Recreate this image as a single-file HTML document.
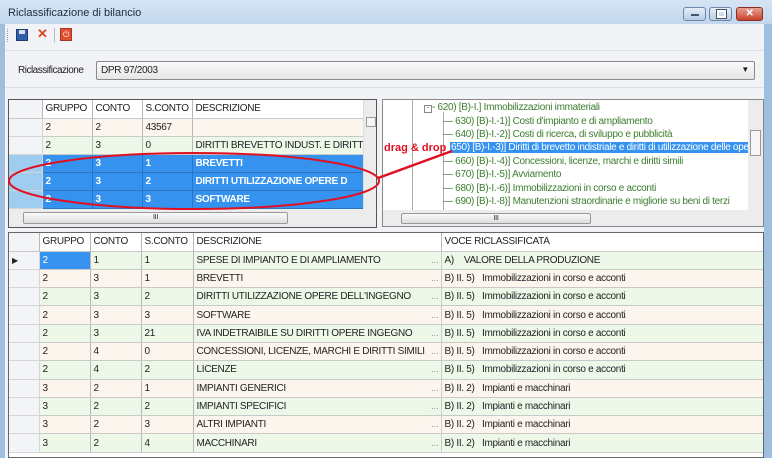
<!DOCTYPE html>
<html><head><meta charset="utf-8"><style>
*{margin:0;padding:0;box-sizing:border-box}
body{width:772px;height:458px;overflow:hidden;background:#9fbfe0;font-family:"Liberation Sans",Arial,sans-serif;font-size:10px;letter-spacing:-0.3px;color:#222;position:relative}
.a{position:absolute}
.title{left:0;top:0;width:772px;height:24px;background:linear-gradient(#d6e5f5,#c2d7ee)}
.client{left:5px;top:24px;width:759px;height:434px;background:#f1f3f6}
.btn{top:7px;height:14px;border:1px solid #6d87a8;border-radius:3px;background:linear-gradient(#e4eef9,#b8cce4)}
table{border-collapse:collapse;table-layout:fixed}
td,th{border-right:1px solid #b8b8b8;border-bottom:1px solid #c9c9c9;padding:0 3px;white-space:nowrap;overflow:hidden;text-align:left;font-weight:normal;height:18px;line-height:17px}
.bt td{height:18.3px}
th{background:#fff}
.g td{background:#edf8e9}.b td{background:#fcf5ee}
.s td{background:#3592ef;color:#fff;font-weight:bold;border-color:#2a75c4}
td.rh{background:#f2f4f7!important;border-color:#d5d5d5}
td.d{color:#999;padding:0;text-align:center;border-right:1px solid #ccc}
td.dd{border-right:none}
.tree div{position:absolute;color:#3b7d2e;font-size:10px;white-space:nowrap}
</style></head><body>
<div class="a title"></div>
<div class="a" style="left:8px;top:7px;font-size:11px;letter-spacing:0;color:#1d2c40">Riclassificazione di bilancio</div>
<div class="a btn" style="left:683px;width:23px"><div class="a" style="left:7px;top:6px;width:8px;height:2px;background:#fff;border:1px solid #456"></div></div>
<div class="a btn" style="left:709px;width:23px"><div class="a" style="left:7px;top:2px;width:9px;height:8px;border:2px solid #fff;outline:1px solid #456"></div></div>
<div class="a btn" style="left:736px;width:27px;background:linear-gradient(#e9a093,#c7432d);border-color:#8a3020;color:#fff;font-weight:bold;font-size:10px;text-align:center;line-height:12px">✕</div>
<div class="a client"></div>
<div class="a" style="left:7px;top:29px;width:1px;height:13px;border-left:1px dotted #999"></div>
<div class="a" style="left:16px;top:29px;width:12px;height:12px;background:#2f5fa8;border:1px solid #1c3d70"><div class="a" style="left:2px;top:0;width:6px;height:4px;background:#dde"></div></div>
<div class="a" style="left:37px;top:26px;color:#d42;font-size:13px;font-weight:bold">✕</div>
<div class="a" style="left:54px;top:28px;width:1px;height:14px;background:#bbb"></div>
<div class="a" style="left:60px;top:28px;width:12px;height:13px;background:#e0502a;border:1px solid #a33;color:#fff;font-size:8px;text-align:center;line-height:11px">⏻</div>
<div class="a" style="left:5px;top:50px;width:759px;height:1px;background:#dde"></div>
<div class="a" style="left:18px;top:65px;font-size:10px;letter-spacing:-0.5px">Riclassificazione</div>
<div class="a" style="left:96px;top:61px;width:659px;height:19px;border:1px solid #8a8a8a;border-radius:2px;background:linear-gradient(#fafafa,#e6e6e6);padding:3px 0 0 4px">DPR 97/2003<span class="a" style="right:5px;top:3px;font-size:8px">▼</span></div>
<div class="a" style="left:5px;top:87px;width:759px;height:1px;background:#dde"></div>

<div class="a" style="left:8px;top:99px;width:369px;height:129px;border:1px solid #555;background:#fff;overflow:hidden">
<table style="width:354px">
<colgroup><col style="width:33px"><col style="width:50px"><col style="width:50px"><col style="width:50px"><col style="width:171px"></colgroup>
<tr><th style="background:#f2f4f7"></th><th>GRUPPO</th><th>CONTO</th><th>S.CONTO</th><th>DESCRIZIONE</th></tr>
<tr class="b"><td class="rh"></td><td>2</td><td>2</td><td>43567</td><td></td></tr>
<tr class="g"><td class="rh"></td><td>2</td><td>3</td><td>0</td><td>DIRITTI BREVETTO INDUST. E DIRITTI</td></tr>
<tr class="s"><td class="rh" style="background:#9fcdf0!important"></td><td>2</td><td>3</td><td>1</td><td>BREVETTI</td></tr>
<tr class="s"><td class="rh" style="background:#9fcdf0!important"></td><td>2</td><td>3</td><td>2</td><td>DIRITTI UTILIZZAZIONE OPERE D</td></tr>
<tr class="s"><td class="rh" style="background:#9fcdf0!important"></td><td>2</td><td>3</td><td>3</td><td>SOFTWARE</td></tr>
</table>
<div class="a" style="left:354px;top:0;width:14px;height:109px;background:#ececec;border-left:1px solid #ddd"><div class="a" style="left:2px;top:17px;width:10px;height:10px;border:1px solid #999;background:#f6f6f6"></div></div>
<div class="a" style="left:0;top:109px;width:368px;height:19px;background:#ececec"><div class="a" style="left:14px;top:3px;width:265px;height:12px;border:1px solid #999;border-radius:2px;background:linear-gradient(#fafafa,#ddd);text-align:center;font-size:7px;line-height:10px">III</div></div>
</div>

<div class="a" style="left:382px;top:99px;width:382px;height:128px;border:1px solid #888;background:#fff;overflow:hidden">
<div class="a" style="left:29px;top:0;width:1px;height:110px;background:#aaa"></div>
<div class="a" style="left:60px;top:12px;width:1px;height:98px;background:#aaa"></div>
<div class="tree">
<div style="left:41px;top:2px"><span style="display:inline-block;width:8px;height:8px;border:1px solid #888;font-size:7px;line-height:6px;text-align:center;color:#333">-</span>- 620) [B)-I.] Immobilizzazioni immateriali</div>
<div style="left:60px;top:16px">— 630) [B)-I.-1)] Costi d'impianto e di ampliamento</div>
<div style="left:60px;top:29px">— 640) [B)-I.-2)] Costi di ricerca, di sviluppo e pubblicità</div>
<div style="left:67px;top:42px;background:#3592ef;color:#fff;width:298px;padding-left:1px;overflow:hidden">650) [B)-I.-3)] Diritti di brevetto indistriale e diritti di utilizzazione delle opere</div>
<div style="left:60px;top:56px">— 660) [B)-I.-4)] Concessioni, licenze, marchi e diritti simili</div>
<div style="left:60px;top:69px">— 670) [B)-I.-5)] Avviamento</div>
<div style="left:60px;top:83px">— 680) [B)-I.-6)] Immobilizzazioni in corso e acconti</div>
<div style="left:60px;top:96px">— 690) [B)-I.-8)] Manutenzioni straordinarie e migliorie su beni di terzi</div>
</div>
<div class="a" style="left:365px;top:0;width:16px;height:110px;background:#ececec"><div class="a" style="left:2px;top:30px;width:11px;height:26px;border:1px solid #999;background:#f6f6f6"></div></div>
<div class="a" style="left:0;top:110px;width:380px;height:17px;background:#ececec"><div class="a" style="left:18px;top:3px;width:190px;height:11px;border:1px solid #999;border-radius:2px;background:linear-gradient(#fafafa,#ddd);text-align:center;font-size:7px;line-height:9px">III</div></div>
</div>

<svg class="a" style="left:0;top:0" width="772" height="458">
<ellipse cx="194" cy="181" rx="185" ry="28" fill="none" stroke="#e01020" stroke-width="2"/>
<path d="M378 178 L452 151" stroke="#e01020" stroke-width="2.5" fill="none"/>
</svg>
<div class="a" style="left:384px;top:142px;color:#e01020;font-weight:bold;font-size:11px;letter-spacing:0">drag &amp; drop</div>

<div class="a" style="left:8px;top:232px;width:756px;height:226px;border:1px solid #666;background:#fff;overflow:hidden">
<table class="bt" style="width:754px">
<colgroup><col style="width:30px"><col style="width:51px"><col style="width:51px"><col style="width:52px"><col style="width:236px"><col style="width:12px"><col style="width:322px"></colgroup>
<tr><th style="background:#f2f4f7"></th><th>GRUPPO</th><th>CONTO</th><th>S.CONTO</th><th class="dd" style="border-right:none">DESCRIZIONE</th><th></th><th>VOCE RICLASSIFICATA</th></tr>
<tr class="g"><td class="rh" style="font-size:8px">▶</td><td style="background:#3592ef;color:#fff">2</td><td>1</td><td>1</td><td class="dd">SPESE DI IMPIANTO E DI AMPLIAMENTO</td><td class="d">...</td><td>A)&nbsp;&nbsp;&nbsp; VALORE DELLA PRODUZIONE</td></tr>
<tr class="b"><td class="rh"></td><td>2</td><td>3</td><td>1</td><td class="dd">BREVETTI</td><td class="d">...</td><td>B) II. 5)&nbsp;&nbsp; Immobilizzazioni in corso e acconti</td></tr>
<tr class="g"><td class="rh"></td><td>2</td><td>3</td><td>2</td><td class="dd">DIRITTI UTILIZZAZIONE OPERE DELL'INGEGNO</td><td class="d">...</td><td>B) II. 5)&nbsp;&nbsp; Immobilizzazioni in corso e acconti</td></tr>
<tr class="b"><td class="rh"></td><td>2</td><td>3</td><td>3</td><td class="dd">SOFTWARE</td><td class="d">...</td><td>B) II. 5)&nbsp;&nbsp; Immobilizzazioni in corso e acconti</td></tr>
<tr class="g"><td class="rh"></td><td>2</td><td>3</td><td>21</td><td class="dd">IVA INDETRAIBILE SU DIRITTI OPERE INGEGNO</td><td class="d">...</td><td>B) II. 5)&nbsp;&nbsp; Immobilizzazioni in corso e acconti</td></tr>
<tr class="b"><td class="rh"></td><td>2</td><td>4</td><td>0</td><td class="dd">CONCESSIONI, LICENZE, MARCHI E DIRITTI SIMILI</td><td class="d">...</td><td>B) II. 5)&nbsp;&nbsp; Immobilizzazioni in corso e acconti</td></tr>
<tr class="g"><td class="rh"></td><td>2</td><td>4</td><td>2</td><td class="dd">LICENZE</td><td class="d">...</td><td>B) II. 5)&nbsp;&nbsp; Immobilizzazioni in corso e acconti</td></tr>
<tr class="b"><td class="rh"></td><td>3</td><td>2</td><td>1</td><td class="dd">IMPIANTI GENERICI</td><td class="d">...</td><td>B) II. 2)&nbsp;&nbsp; Impianti e macchinari</td></tr>
<tr class="g"><td class="rh"></td><td>3</td><td>2</td><td>2</td><td class="dd">IMPIANTI SPECIFICI</td><td class="d">...</td><td>B) II. 2)&nbsp;&nbsp; Impianti e macchinari</td></tr>
<tr class="b"><td class="rh"></td><td>3</td><td>2</td><td>3</td><td class="dd">ALTRI IMPIANTI</td><td class="d">...</td><td>B) II. 2)&nbsp;&nbsp; Impianti e macchinari</td></tr>
<tr class="g"><td class="rh"></td><td>3</td><td>2</td><td>4</td><td class="dd">MACCHINARI</td><td class="d">...</td><td>B) II. 2)&nbsp;&nbsp; Impianti e macchinari</td></tr>
</table>
</div>
</body></html>
